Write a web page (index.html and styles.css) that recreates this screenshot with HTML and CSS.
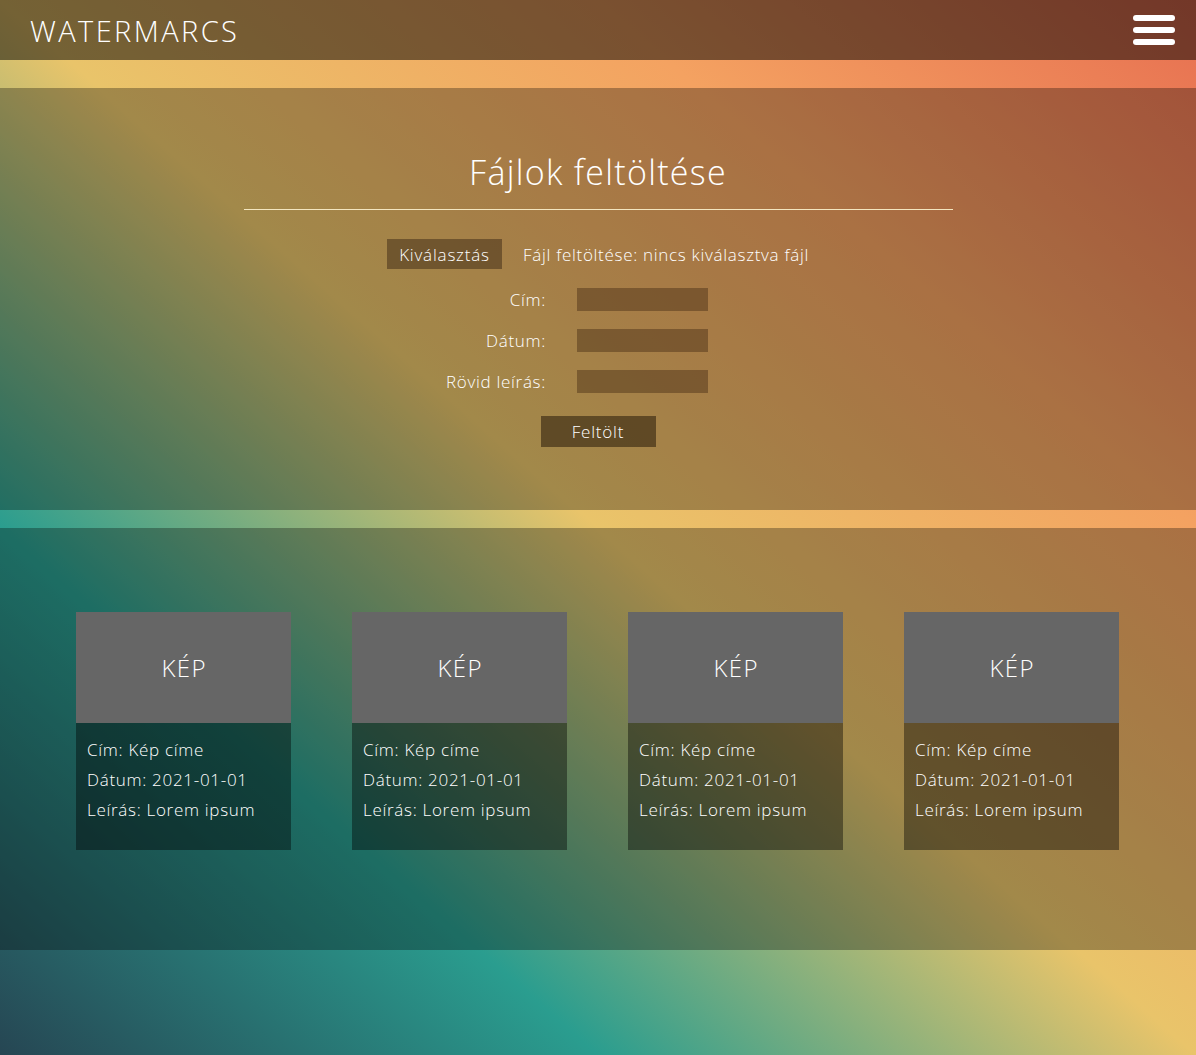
FILE: index.html
```html
<!DOCTYPE html>
<html lang="hu">
<head>
<meta charset="utf-8">
<title>Watermarcs</title>
<link rel="stylesheet" href="styles.css">
</head>
<body>
<header class="topbar">
  <div class="logo">WATERMARCS</div>
  <svg class="menu" width="42" height="32" viewBox="0 0 42 32">
    <line x1="3" y1="4" x2="39" y2="4"/>
    <line x1="3" y1="16" x2="39" y2="16"/>
    <line x1="3" y1="28" x2="39" y2="28"/>
  </svg>
</header>
<div class="stripe stripe-top"></div>
<section class="upload">
  <h1 class="title">Fájlok feltöltése</h1>
  <div class="rule"></div>
  <div class="file-row">
    <span class="btn pick">Kiválasztás</span>
    <span class="file-text">Fájl feltöltése: nincs kiválasztva fájl</span>
  </div>
  <div class="fields">
    <div class="field"><label class="lbl">Cím:</label><span class="inp"></span></div>
    <div class="field"><label class="lbl">Dátum:</label><span class="inp"></span></div>
    <div class="field"><label class="lbl">Rövid leírás:</label><span class="inp"></span></div>
  </div>
  <div class="submit-row"><span class="btn submit">Feltölt</span></div>
</section>
<div class="stripe stripe-mid"></div>
<section class="gallery">
  <div class="card"><div class="pic">KÉP</div><div class="info"><p>Cím: Kép címe</p><p>Dátum: 2021-01-01</p><p>Leírás: Lorem ipsum</p></div></div>
  <div class="card"><div class="pic">KÉP</div><div class="info"><p>Cím: Kép címe</p><p>Dátum: 2021-01-01</p><p>Leírás: Lorem ipsum</p></div></div>
  <div class="card"><div class="pic">KÉP</div><div class="info"><p>Cím: Kép címe</p><p>Dátum: 2021-01-01</p><p>Leírás: Lorem ipsum</p></div></div>
  <div class="card"><div class="pic">KÉP</div><div class="info"><p>Cím: Kép címe</p><p>Dátum: 2021-01-01</p><p>Leírás: Lorem ipsum</p></div></div>
</section>
</body>
</html>
```
FILE: styles.css
```css
html, body {
  margin: 0;
  padding: 0;
}
body {
  min-height: 1055px;
  background: linear-gradient(to top right, #264653 0%, #2a9d8f 25%, #e9c46a 50%, #f4a261 75%, #e76f51 100%);
  font-family: "Open Sans", Lato, sans-serif;
  font-weight: 300;
  color: #fff;
}
.topbar {
  height: 60px;
  background: rgba(0, 0, 0, 0.5);
  display: flex;
  align-items: center;
  justify-content: space-between;
  padding: 0 21px 0 30px;
}
.logo {
  font-size: 29px;
  font-weight: 300;
  letter-spacing: 2.4px;
  line-height: 1;
  margin-top: 1px;
}
.menu line {
  stroke: #fff;
  stroke-width: 6;
  stroke-linecap: round;
}
.stripe-top { height: 28px; }
.stripe-mid { height: 18px; }
.upload {
  height: 422px;
  box-sizing: border-box;
  background: rgba(0, 0, 0, 0.3);
  padding-top: 63px;
  display: flex;
  flex-direction: column;
  align-items: center;
}
.title {
  margin: 0;
  font-size: 34px;
  font-weight: 300;
  line-height: 42px;
  letter-spacing: 1.3px;
}
.rule {
  width: 709px;
  height: 1px;
  background: #f3e6c0;
  margin-top: 16px;
}
.file-row {
  margin-top: 29px;
  display: flex;
  align-items: center;
  gap: 21px;
  font-size: 17px;
  letter-spacing: 0.7px;
}
.btn {
  display: flex;
  align-items: center;
  justify-content: center;
  width: 115px;
  font-size: 17px;
  letter-spacing: 0.8px;
}
.pick {
  height: 30px;
  background: rgba(60, 40, 20, 0.5);
}
.fields {
  margin-top: 19px;
  display: flex;
  flex-direction: column;
  gap: 18px;
  padding-right: 142px;
}
.field {
  display: flex;
  align-items: center;
  height: 23px;
}
.lbl {
  width: 200px;
  text-align: right;
  margin-right: 31px;
  font-size: 17px;
  letter-spacing: 0.7px;
}
.inp {
  width: 131px;
  height: 23px;
  background: rgba(70, 45, 20, 0.45);
}
.submit-row {
  margin-top: 23px;
}
.submit {
  height: 31px;
  background: rgba(50, 35, 15, 0.6);
}
.gallery {
  height: 422px;
  box-sizing: border-box;
  background: rgba(0, 0, 0, 0.3);
  padding: 84px 77px 0 76px;
  display: flex;
  justify-content: space-between;
  align-items: flex-start;
}
.card {
  width: 215px;
}
.pic {
  height: 111px;
  background: #666;
  display: flex;
  align-items: center;
  justify-content: center;
  font-size: 24px;
  letter-spacing: 1.5px;
  padding-left: 1.5px;
  box-sizing: border-box;
}
.info {
  height: 127px;
  box-sizing: border-box;
  background: rgba(0, 0, 0, 0.4);
  padding: 12px 11px 0;
  font-size: 17px;
  letter-spacing: 0.7px;
}
.info p {
  margin: 0;
  line-height: 30px;
}
```
